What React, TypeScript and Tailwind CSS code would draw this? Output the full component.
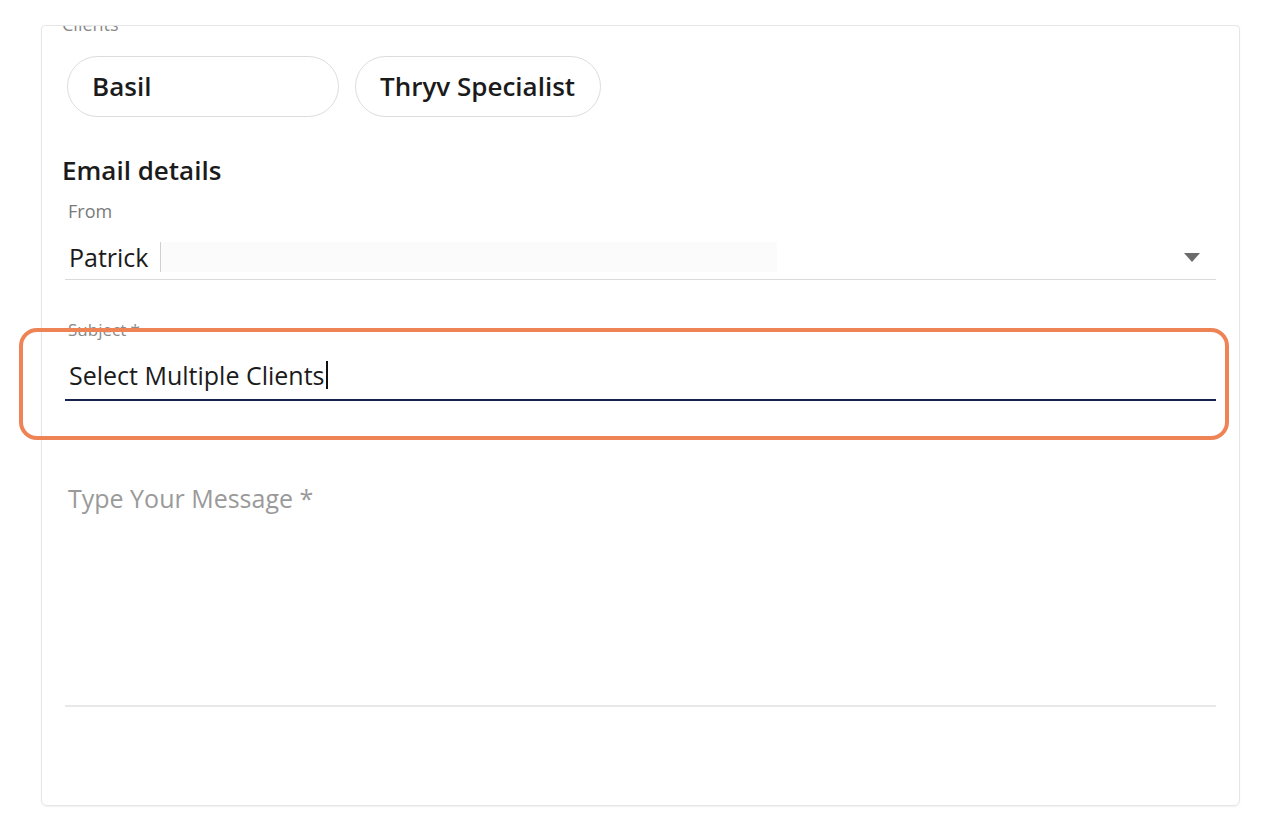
import { useState } from 'react'

const font = { fontFamily: '"Open Sans", "Noto Sans", sans-serif' }

function Chip({ label, className }: { label: string; className?: string }) {
  return (
    <div
      className={`flex h-[61px] items-center rounded-full border border-[#dcdcdc] bg-white pl-6 pr-[25px] text-[26px] font-semibold text-[#1b1b1b] ${className ?? ''}`}
    >
      {label}
    </div>
  )
}

export default function App() {
  const [subject] = useState('Select Multiple Clients')

  return (
    <div className="min-h-[828px] bg-white pl-[41px] pt-[25px]" style={font}>
      <div className="relative h-[781px] w-[1199px] overflow-hidden rounded-b-md rounded-t-sm border border-[#e6e6e6] shadow-[0_1px_2px_rgba(0,0,0,0.06)]">
        {/* top label, clipped by the card edge */}
        <div className="-mt-[13px] pl-[20px] text-[18px] leading-[22px] text-[#8a8a8a]">Clients</div>

        <div className="mt-[21px] flex gap-4 pl-[25px]">
          <Chip label="Basil" className="w-[272px]" />
          <Chip label="Thryv Specialist" />
        </div>

        <div className="px-[23px]">
          <h2 className="-ml-[3px] mt-[37px] text-[26px] font-semibold leading-[32px] text-[#1b1b1b]">Email details</h2>

          {/* From */}
          <div className="mt-[14px] pl-[3px] text-[18px] leading-[22px] text-[#7a7a7a]">From</div>
          <div className="relative mt-[12px] flex h-[46px] items-center border-b border-[#dadada] pl-[4px]">
            <span className="text-[25px] leading-[32px] text-[#1b1b1b]">Patrick</span>
            <span className="ml-[12px] h-[30px] w-[617px] border-l border-[#d0d0d0] bg-[#fbfbfb]" />
            <svg className="absolute right-[16px] top-[19px]" width="16" height="9" viewBox="0 0 16 9">
              <path d="M0 0h16L8 9z" fill="#6b6b6b" />
            </svg>
          </div>

          {/* Subject */}
          <div className="mt-[40px] pl-[3px] text-[17px] leading-[20px] text-[#8a8a8a]">Subject *</div>
          <div className="mt-[11px] flex h-[50px] items-center border-b-2 border-[#17224d] pl-[4px]">
            <span className="text-[25px] leading-[32px] text-[#1b1b1b]">{subject}</span>
            <span className="ml-px h-[28px] w-[2px] bg-[#111]" />
          </div>

          {/* Message */}
          <div className="mt-[81px] h-[225px] border-b-2 border-[#e8e8e8] pl-[3px]">
            <span className="text-[25px] leading-[32px] text-[#9a9a9a]">Type Your Message *</span>
          </div>
        </div>
      </div>

      {/* annotation highlight */}
      <div className="pointer-events-none absolute left-[19px] top-[328px] h-[112px] w-[1210px] rounded-[18px] border-[4px] border-[#ee8456]" />
    </div>
  )
}
